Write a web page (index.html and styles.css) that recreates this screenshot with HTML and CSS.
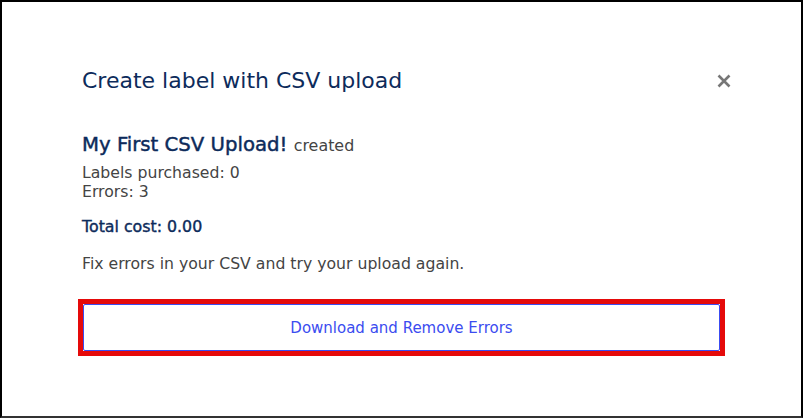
FILE: index.html
```html
<!DOCTYPE html>
<html lang="en">
<head>
    <meta charset="UTF-8">
    <meta name="viewport" content="width=device-width, initial-scale=1.0">
    <title>Create label with CSV upload</title>
    <link rel="stylesheet" href="styles.css">
</head>
<body>
    <div class="modal">
        <div class="modal-header">
            <h2 class="modal-title">Create label with CSV upload</h2>
            <button class="close-button" aria-label="Close">
                <svg width="14" height="14" viewBox="0 0 14 14">
                    <path d="M1.5 1.5 L12.5 12.5 M12.5 1.5 L1.5 12.5" stroke="#777" stroke-width="2.6"/>
                </svg>
            </button>
        </div>

        <div class="upload-summary">
            <p class="upload-name">My First CSV Upload! <span class="upload-status">created</span></p>
            <p class="upload-line">Labels purchased: 0</p>
            <p class="upload-line">Errors: 3</p>
        </div>

        <p class="total-cost">Total cost: 0.00</p>

        <p class="hint">Fix errors in your CSV and try your upload again.</p>

        <div class="highlight">
            <button class="download-button">Download and Remove Errors</button>
        </div>
    </div>
</body>
</html>
```

FILE: styles.css
```css
body {
    margin: 0;
    font-family: "DejaVu Sans", sans-serif;
    background: #fff;
}

.modal {
    box-sizing: border-box;
    height: 418px;
    border: 2px solid #000;
    border-bottom-color: #333;
    padding: 64px 80px 0 80px;
}

.modal-header {
    display: flex;
    justify-content: space-between;
    align-items: center;
}

.modal-title {
    margin: 0;
    font-size: 22px;
    line-height: 30px;
    font-weight: 400;
    color: #0d2b5b;
}

.close-button {
    background: none;
    border: none;
    padding: 0;
    margin-right: -10px;
    cursor: pointer;
    display: flex;
}

.upload-summary {
    margin-top: 36px;
}

.upload-summary p {
    margin: 0;
}

.upload-name {
    font-size: 19.7px;
    font-weight: 400;
    -webkit-text-stroke: 0.45px #0d2b5b;
    color: #0d2b5b;
    line-height: 26px;
    margin-bottom: 4px !important;
}

.upload-status {
    font-size: 15.9px;
    -webkit-text-stroke: 0;
    color: #444;
}

.upload-line {
    font-size: 15.7px;
    color: #444;
    line-height: 19px;
}

.total-cost {
    margin: 16px 0 0;
    font-size: 15.8px;
    line-height: 20px;
    font-weight: 400;
    -webkit-text-stroke: 0.4px #0d2b5b;
    color: #0d2b5b;
}

.hint {
    margin: 17px 0 0;
    font-size: 15.7px;
    line-height: 20px;
    color: #444;
}

.highlight {
    margin: 25px -4px 0;
    border: 5px solid #e50a0a;
}

.download-button {
    display: block;
    width: 100%;
    height: 47px;
    background: #fff;
    border: 1px solid #3b4cf0;
    border-radius: 2px;
    font-family: inherit;
    font-size: 15px;
    color: #3b4cf0;
    cursor: pointer;
}
```
